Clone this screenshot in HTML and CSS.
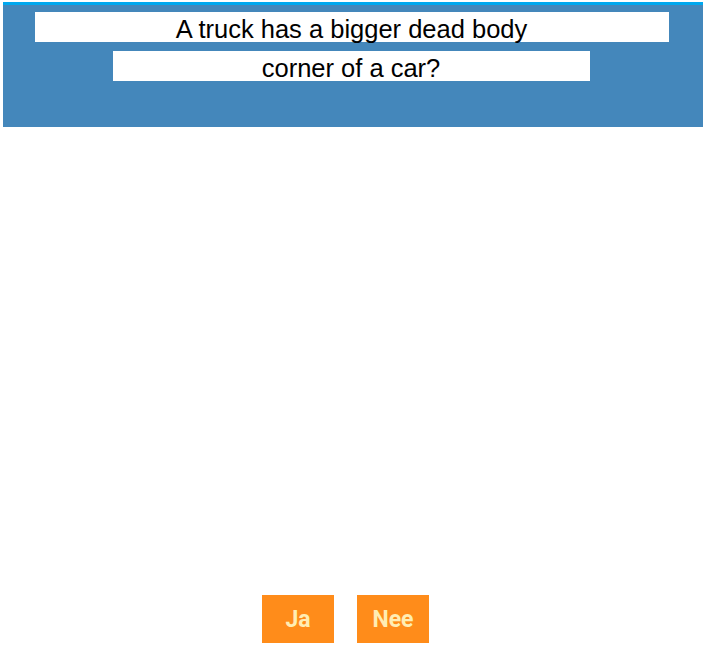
FILE: index.html
```html
<!DOCTYPE html>
<html>
<head>
<meta charset="utf-8">
<link rel="stylesheet" href="styles.css">
</head>
<body>
<div class="page">
  <header class="panel">
    <div class="line line-one">A truck has a bigger dead body</div>
    <div class="line line-two">corner of a car?</div>
  </header>
  <div class="actions">
    <button class="btn btn-ja">Ja</button>
    <button class="btn btn-nee">Nee</button>
  </div>
</div>
</body>
</html>
```
FILE: styles.css
```css
html, body {
  margin: 0;
  padding: 0;
  background: #ffffff;
}
.page {
  width: 700px;
  padding: 2px 3px 0 3px;
  height: 667px;
  display: flex;
  flex-direction: column;
}
.panel {
  border-top: 3px solid #00a8ef;
  background: #4487bb;
  display: flex;
  flex-direction: column;
  align-items: center;
  padding-top: 7px;
  gap: 9px;
  box-sizing: border-box;
  height: 125px;
}
.line {
  background: #ffffff;
  height: 30px;
  line-height: 34px;
  font-family: "Liberation Sans", Arial, sans-serif;
  font-size: 25.5px;
  color: #000;
  text-align: center;
  white-space: nowrap;
}
.line-one {
  width: 634px;
  margin-left: -3px;
}
.line-two {
  width: 477px;
  margin-left: -4px;
}
.actions {
  margin-top: 468px;
  display: flex;
  justify-content: center;
  gap: 23px;
  margin-left: -15px;
}
.btn {
  width: 72px;
  height: 48px;
  border: none;
  background: #ff8c1a;
  color: #ffedb3;
  font-family: Roboto, "Liberation Sans", sans-serif;
  font-weight: bold;
  font-size: 23px;
  padding: 0;
}
```
